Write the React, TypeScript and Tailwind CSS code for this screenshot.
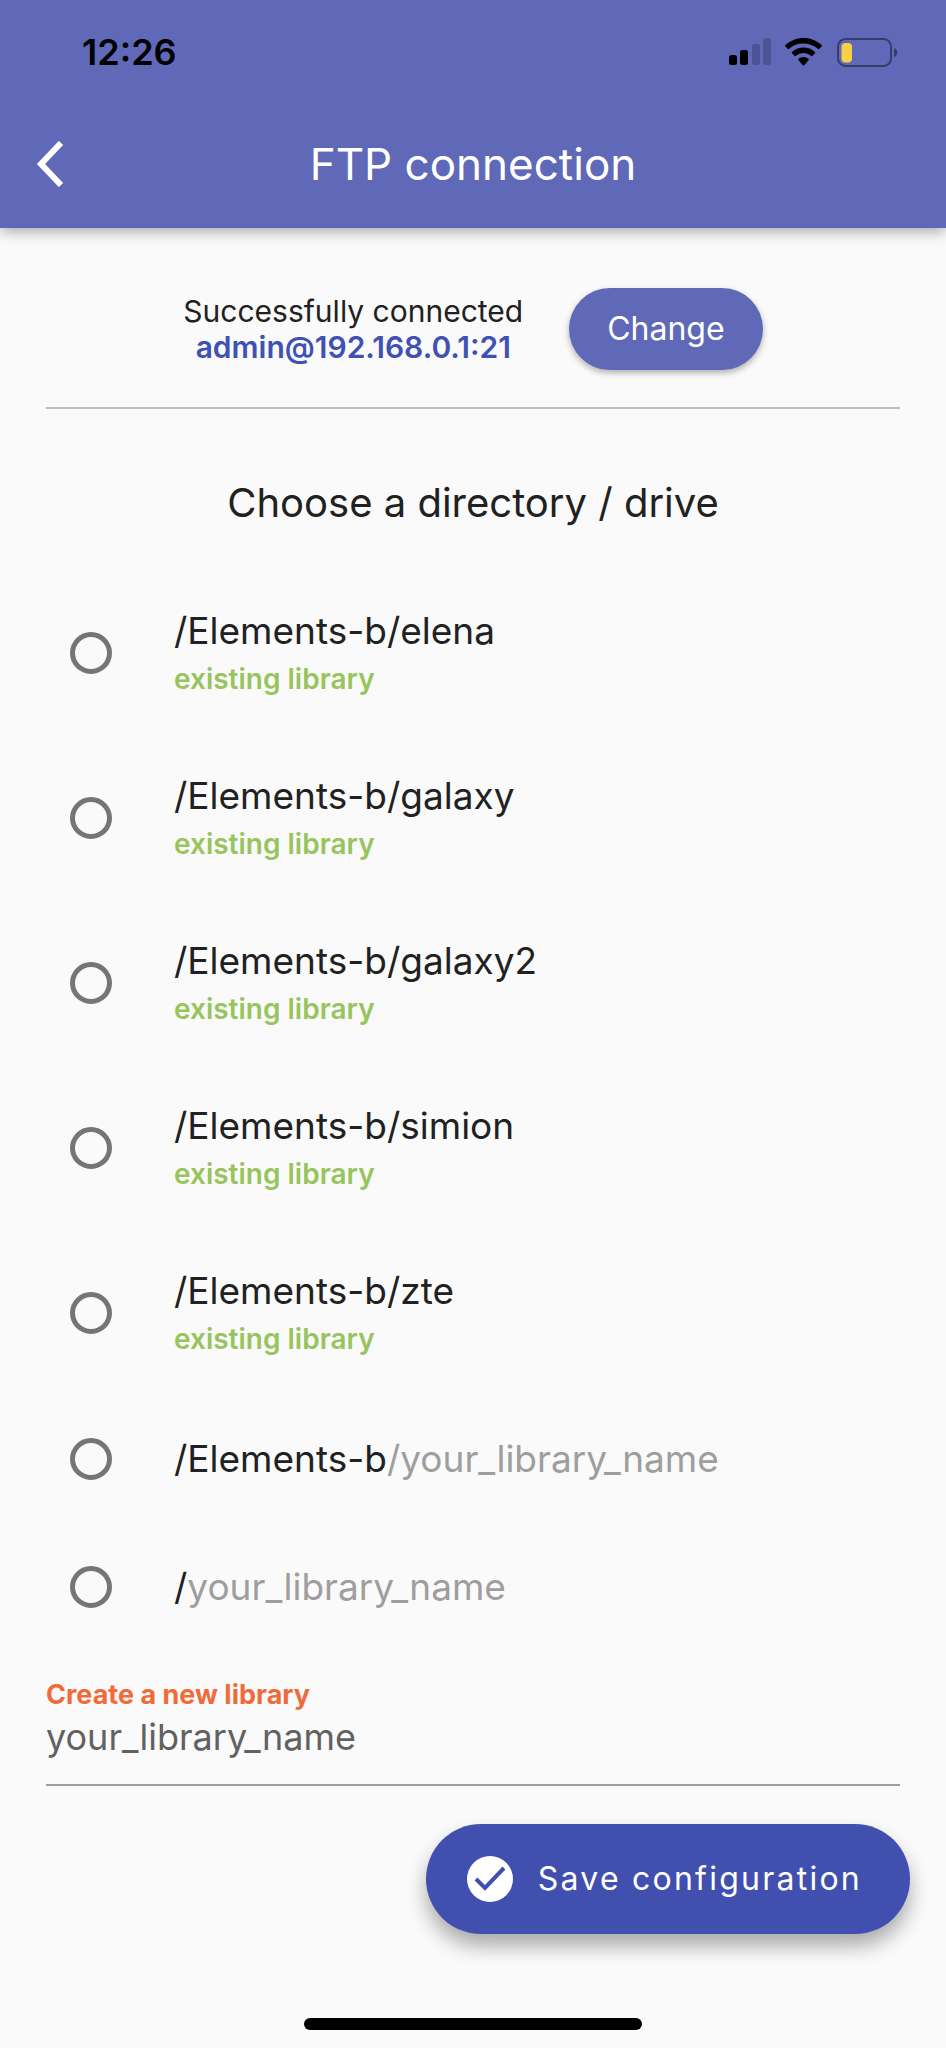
import { useState } from "react";

interface Directory {
  id: string;
  path: string;
  suffix?: string;
  existing?: boolean;
}

const directories: Directory[] = [
  { id: "elena", path: "/Elements-b/elena", existing: true },
  { id: "galaxy", path: "/Elements-b/galaxy", existing: true },
  { id: "galaxy2", path: "/Elements-b/galaxy2", existing: true },
  { id: "simion", path: "/Elements-b/simion", existing: true },
  { id: "zte", path: "/Elements-b/zte", existing: true },
  { id: "new-elements", path: "/Elements-b", suffix: "/your_library_name" },
  { id: "new-root", path: "/", suffix: "your_library_name" },
];

function StatusBar() {
  return (
    <div className="flex h-[104px] items-center justify-between pl-[82px] pr-12">
      <span className="text-[36px] leading-[44px] font-semibold text-black">12:26</span>

      <div className="flex items-center gap-[14px]">
        {/* Signal */}
        <svg width="44" height="28" viewBox="0 0 44 28">
          <rect x="2" y="17" width="8" height="10" rx="2.5" />
          <rect x="13" y="12" width="8" height="15" rx="2.5" />
          <rect x="25" y="6" width="8" height="21" rx="2.5" fillOpacity="0.2" />
          <rect x="36" y="0" width="8" height="27" rx="2.5" fillOpacity="0.2" />
        </svg>

        {/* Wifi */}
        <svg width="37" height="28" viewBox="0 0 37 28">
          <path d="M18.5 0C11.4 0 5 2.7 0.4 7.1a1 1 0 0 0 0 1.4l2.3 2.3a1 1 0 0 0 1.4 0A20.6 20.6 0 0 1 18.5 5.4c5.5 0 10.5 2 14.4 5.4a1 1 0 0 0 1.4 0l2.3-2.3a1 1 0 0 0 0-1.4C32 2.7 25.6 0 18.5 0z" />
          <path d="M18.5 9.5c-4.5 0-8.5 1.7-11.5 4.4a1 1 0 0 0 0 1.4l2.5 2.5a1 1 0 0 0 1.4 0a11.5 11.5 0 0 1 15.2 0a1 1 0 0 0 1.4 0l2.5-2.5a1 1 0 0 0 0-1.4a17 17 0 0 0-11.500-4.400z" />
          <path d="M18.5 19c-2 0-3.7.7-5 1.8a1 1 0 0 0 0 1.4l4.3 5a1 1 0 0 0 1.4 0l4.3-5a1 1 0 0 0 0-1.400a8 8 0 0 0-5-1.800z" />
        </svg>

        {/* Battery */}
        <svg width="62" height="29" viewBox="0 0 62 29">
          <rect x="2" y="1" width="53" height="27" rx="7.5" fill="none" stroke="#000" strokeOpacity="0.42" strokeWidth="2" />
          <rect x="5.5" y="5" width="10.500" height="19.500" rx="4" fill="#f9cf45" />
          <path d="M58 10c2 .8 3.200 2.400 3.200 4.500S60 18.200 58 19z" fillOpacity="0.42" />
        </svg>
      </div>
    </div>
  );
}

function App() {
  const [selected, setSelected] = useState("");
  const [libraryName, setLibraryName] = useState("your_library_name");

  return (
    <div className="flex min-h-screen flex-col bg-[#fafafa] font-['Inter',sans-serif] text-[#212121]">
      <header className="h-[228px] bg-[#5f69b8] shadow-[0_3px_14px_rgba(0,0,0,0.35)]">
        <StatusBar />
        <div className="grid grid-cols-[100px_1fr_100px] items-center pt-[30px]">
          <button type="button" aria-label="Back" className="pl-9">
            <svg width="28" height="46" viewBox="0 0 28 46" fill="none" stroke="#fff" strokeWidth="6">
              <path d="M25 2L5 23l20 21" />
            </svg>
          </button>
          <h1 className="text-center text-[44px] leading-[60px] text-white">FTP connection</h1>
        </div>
      </header>

      <main className="flex flex-col px-[46px]">
        {/* Connection */}
        <section className="flex items-center justify-center gap-[46px] border-b-2 border-[#bdbdbd] pt-[60px] pb-[37px]">
          <div className="text-center text-[30px] leading-9">
            <p>Successfully connected</p>
            <p className="font-semibold text-[#3f51b5]">admin@192.168.0.1:21</p>
          </div>
          <button
            type="button"
            className="h-[82px] rounded-full bg-[#5f69b8] px-[38px] text-[32px] text-white shadow-[0_3px_6px_rgba(0,0,0,0.3)]"
          >
            Change
          </button>
        </section>

        <h2 className="pt-[68px] pb-[41px] text-center text-[40px] leading-[52px]">
          Choose a directory / drive
        </h2>

        {/* Directories */}
        <div role="radiogroup" aria-label="Directories">
          {directories.map((dir) => (
            <label
              key={dir.id}
              className={`flex items-center gap-[62px] pl-6 ${dir.existing ? "h-[165px]" : "h-32"}`}
            >
              <input
                type="radio"
                name="directory"
                value={dir.id}
                checked={selected === dir.id}
                onChange={() => setSelected(dir.id)}
                className="size-[42px] shrink-0 appearance-none rounded-full border-[5px] border-[#757575] checked:border-[12px] checked:border-[#3f51b5]"
              />
              <span className={`flex flex-col ${dir.existing ? "pt-1" : ""}`}>
                <span className="text-[37px] leading-[48px]">
                  {dir.path}
                  {dir.suffix && <span className="text-[#9e9e9e]">{dir.suffix}</span>}
                </span>
                {dir.existing && (
                  <span className="text-[28px] leading-[48px] font-semibold text-[#98c45d]">
                    existing library
                  </span>
                )}
              </span>
            </label>
          ))}
        </div>

        {/* New library */}
        <div className="flex flex-col border-b-2 border-[#9e9e9e] pt-[26px] pb-[23px]">
          <label htmlFor="library" className="text-[27px] leading-9 font-bold text-[#f06a3a]">
            Create a new library
          </label>
          <input
            id="library"
            type="text"
            value={libraryName}
            onChange={(e) => setLibraryName(e.target.value)}
            className="h-[48px] w-full bg-transparent text-[36px] text-[#616161] outline-none"
          />
        </div>
      </main>

      <div className="flex justify-end pt-[38px] pr-9">
        <button
          type="button"
          className="flex h-[110px] items-center gap-6 rounded-full bg-[#4150af] pr-12 pl-10 text-[32px] tracking-[0.07em] text-white shadow-[0_12px_20px_rgba(0,0,0,0.32)]"
        >
          <svg width="48" height="48" viewBox="0 0 48 48">
            <circle cx="24" cy="24" r="23" fill="#fff" />
            <path d="M10 24l9 9 19-20" fill="none" stroke="#4150af" strokeWidth="4" />
          </svg>
          Save configuration
        </button>
      </div>

      <div className="mx-auto mt-auto mb-[18px] h-3 w-[338px] rounded-full bg-black" />
    </div>
  );
}

export default App;
